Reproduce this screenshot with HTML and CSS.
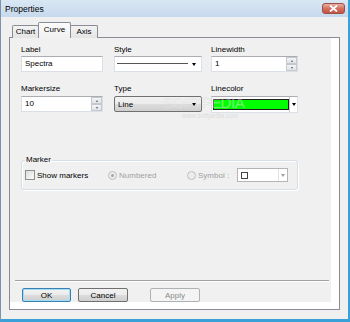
FILE: index.html
```html
<!DOCTYPE html>
<html lang="en">
<head>
  <meta charset="UTF-8" />
  <title>Properties</title>
  <link rel="stylesheet" href="styles.css">
</head>
<body>
  <div class="window">
    <div class="titlebar">
      <span class="title">Properties</span>
      <div class="close">
        <svg width="9" height="7" viewBox="0 0 9 7"><path d="M1 0.5 L8 6.5 M8 0.5 L1 6.5" stroke="#fff" stroke-width="1.8"/></svg>
      </div>
    </div>
    <div class="client">
      <div class="tabs">
        <div class="tab tab-chart">Chart</div>
        <div class="tab tab-curve active">Curve</div>
        <div class="tab tab-axis">Axis</div>
      </div>
      <div class="pane">
        <div class="page">
          <div class="row row-first">
            <div class="field c1">
              <label>Label</label>
              <div class="textbox">Spectra</div>
            </div>
            <div class="field c2">
              <label>Style</label>
              <div class="textbox combo">
                <span class="line-sample"></span>
                <span class="arrow"></span>
              </div>
            </div>
            <div class="field c3">
              <label>Linewidth</label>
              <div class="textbox spin">
                <span class="value">1</span>
                <span class="spinner">
                  <span class="sbtn"><i class="up"></i></span>
                  <span class="sbtn"><i class="down"></i></span>
                </span>
              </div>
            </div>
          </div>

          <div class="row row-second">
            <div class="field c1">
              <label>Markersize</label>
              <div class="textbox spin">
                <span class="value">10</span>
                <span class="spinner">
                  <span class="sbtn"><i class="up"></i></span>
                  <span class="sbtn"><i class="down"></i></span>
                </span>
              </div>
            </div>
            <div class="field c2">
              <label>Type</label>
              <div class="dropbtn">
                <span class="value">Line</span>
                <span class="arrow"></span>
              </div>
            </div>
            <div class="field c3">
              <label>Linecolor</label>
              <div class="textbox colorbox">
                <span class="swatch"></span>
                <span class="colordrop"><span class="arrow"></span></span>
              </div>
            </div>
          </div>

          <fieldset class="group">
            <legend>Marker</legend>
            <div class="group-row">
              <span class="opt opt-show"><span class="check"></span>Show markers</span>
              <span class="opt opt-num disabled"><span class="radio checked"></span>Numbered</span>
              <span class="opt opt-sym disabled"><span class="radio"></span>Symbol :</span>
              <span class="symcombo">
                <span class="symbox"><span class="square"></span></span>
                <span class="symdrop"><span class="arrow"></span></span>
              </span>
            </div>
          </fieldset>

          <div class="separator"></div>

          <div class="buttons">
            <button class="btn btn-default">OK</button>
            <button class="btn">Cancel</button>
            <button class="btn btn-apply" disabled>Apply</button>
          </div>

          <div class="watermark">SOFTPEDIA</div>
          <div class="watermark-url">www.softpedia.com</div>
        </div>
      </div>
    </div>
  </div>
</body>
</html>
```

FILE: styles.css
```css
html, body {
  margin: 0;
}
body {
  font-family: "Liberation Sans", Arial, sans-serif;
  font-size: 8px;
  color: #000;
  background: #f0f0f0;
}
.window {
  width: 350px;
  height: 322px;
  box-sizing: border-box;
  border-left: 1px solid #7d93ab;
  border-right: 2px solid #3aa0d8;
  border-bottom: 3px solid #3aa0d8;
  background: #f0f0f0;
  display: flex;
  flex-direction: column;
  overflow: hidden;
}
.titlebar {
  height: 17px;
  flex: none;
  display: flex;
  align-items: center;
  justify-content: space-between;
  background: linear-gradient(to bottom, #dae7f4, #c6d9ed);
  padding-left: 4px;
}
.title {
  font-size: 8.5px;
}
.close {
  width: 23px;
  height: 11px;
  margin-right: 3px;
  box-sizing: border-box;
  border: 1px solid #9a5047;
  border-radius: 3px;
  background: linear-gradient(to bottom, #eab0a6, #d3705f 50%, #c55443);
  display: flex;
  align-items: center;
  justify-content: center;
}
.client {
  flex: 1;
  padding: 5px 0 0 8px;
}

/* tabs */
.tabs {
  display: flex;
  align-items: flex-end;
  height: 16px;
  padding-left: 3px;
  margin-bottom: -1px;
  position: relative;
  z-index: 1;
}
.tab {
  height: 13px;
  box-sizing: border-box;
  border: 1px solid #898c95;
  border-bottom: none;
  background: linear-gradient(to bottom, #f3f3f3, #e4e4e4);
  border-radius: 2px 2px 0 0;
  text-align: center;
  line-height: 12px;
}
.tab-chart { width: 27px; }
.tab-curve { width: 33px; margin-left: -1px; }
.tab-axis { width: 28px; margin-left: -1px; }
.tab.active {
  height: 16px;
  background: linear-gradient(to bottom, #fbfbfb, #f0f0f0);
  line-height: 13px;
  position: relative;
  z-index: 2;
}

/* pane */
.pane {
  width: 331px;
  height: 273px;
  box-sizing: border-box;
  border: 1px solid #898c95;
  background: #fff;
}
.page {
  position: relative;
  width: 321px;
  height: 264px;
  box-sizing: border-box;
  background: #f0f0f0;
  padding: 7px 0 0 11px;
}
.row {
  display: flex;
}
.row-second {
  margin-top: 12px;
}
.field {
  display: flex;
  flex-direction: column;
}
.field label {
  height: 10px;
  line-height: 10px;
  margin-bottom: 1px;
}
.row-second .field label {
  margin-bottom: 2px;
}
.c1 { width: 82px; }
.c2 { width: 88px; margin-left: 11px; }
.c3 { width: 87px; margin-left: 9px; }

.textbox {
  height: 16px;
  box-sizing: border-box;
  border: 1px solid #dbdfe6;
  border-top-color: #abadb3;
  background: #fff;
  padding-left: 3px;
  line-height: 14px;
  display: flex;
  align-items: center;
}
.arrow {
  width: 0;
  height: 0;
  border-left: 2.5px solid transparent;
  border-right: 2.5px solid transparent;
  border-top: 3px solid #000;
}
.combo {
  padding: 0 5px 0 2px;
}
.line-sample {
  flex: 1;
  height: 1px;
  border-top: 1px solid #555;
  margin-right: 4px;
}
.spin {
  padding-right: 0;
}
.spin .value {
  flex: 1;
}
.spinner {
  width: 11px;
  height: 14px;
  display: flex;
  flex-direction: column;
}
.sbtn {
  flex: 1;
  box-sizing: border-box;
  border: 1px solid #c5c8cc;
  background: linear-gradient(to bottom, #f3f3f3, #e1e3e6);
  display: flex;
  align-items: center;
  justify-content: center;
}
.sbtn i {
  width: 0;
  height: 0;
  border-left: 1.5px solid transparent;
  border-right: 1.5px solid transparent;
}
.sbtn .up { border-bottom: 2px solid #4d6185; }
.sbtn .down { border-top: 2px solid #4d6185; }

.dropbtn {
  height: 16px;
  box-sizing: border-box;
  border: 1px solid #707070;
  border-radius: 2px;
  background: linear-gradient(to bottom, #f2f2f2, #ebebeb 50%, #dddddd 50%, #cfcfcf);
  display: flex;
  align-items: center;
  padding: 0 5px 0 3px;
}
.dropbtn .value {
  flex: 1;
}

.colorbox {
  height: 17px;
  padding: 0 0 0 1px;
}
.swatch {
  width: 76px;
  height: 11px;
  box-sizing: border-box;
  border: 1px solid #222;
  background: #00ff00;
}
.colordrop {
  flex: 1;
  align-self: stretch;
  border-left: 1px solid #c8c8c8;
  display: flex;
  align-items: center;
  justify-content: center;
}

/* marker group */
.group {
  margin: 42px 0 0 0;
  width: 277px;
  height: 35px;
  box-sizing: border-box;
  border: 1px solid #d5dfe5;
  border-radius: 3px;
  padding: 3px 0 0 3px;
  box-shadow: inset 1px 1px 0 #fff, 1px 1px 0 #fff;
}
.group legend {
  padding: 0 1px;
  height: 10px;
  line-height: 10px;
}
.group-row {
  display: flex;
  align-items: center;
  height: 14px;
}
.opt {
  display: flex;
  align-items: center;
}
.opt-show { width: 83px; }
.opt-num { width: 79px; }
.opt-sym { width: 50px; }
.disabled {
  color: #a0a0a0;
}
.check {
  width: 10px;
  height: 10px;
  box-sizing: border-box;
  border: 1px solid #8e8f8f;
  background: linear-gradient(135deg, #dcdcdc, #fbfbfb);
  margin-right: 2px;
}
.radio {
  width: 9px;
  height: 9px;
  box-sizing: border-box;
  border: 1px solid #c0c0c0;
  border-radius: 50%;
  background: #ececec;
  margin-right: 2px;
  display: flex;
  align-items: center;
  justify-content: center;
}
.radio.checked::after {
  content: "";
  width: 3px;
  height: 3px;
  border-radius: 50%;
  background: #a6a6a6;
}
.symcombo {
  width: 51px;
  height: 14px;
  box-sizing: border-box;
  border: 1px solid #b5b5b5;
  background: #fff;
  display: flex;
}
.symbox {
  width: 37px;
  display: flex;
  align-items: center;
  padding-left: 3px;
}
.square {
  width: 7px;
  height: 7px;
  box-sizing: border-box;
  border: 1.5px solid #444;
}
.symdrop {
  flex: 1;
  border-left: 1px solid #e2e2e2;
  display: flex;
  align-items: center;
  justify-content: center;
}
.symdrop .arrow {
  border-top-color: #a0a0a0;
}

.separator {
  margin: 90px 0 0 -6px;
  width: 314px;
  height: 1px;
  background: #a0a0a0;
  border-bottom: 1px solid #fff;
}
.buttons {
  display: flex;
  margin-top: 6px;
  margin-left: 1px;
}
.btn {
  height: 14px;
  width: 50px;
  box-sizing: border-box;
  padding: 0;
  font-family: "Liberation Sans", Arial, sans-serif;
  font-size: 8px;
  color: #000;
  border: 1px solid #707070;
  border-radius: 2px;
  background: linear-gradient(to bottom, #f2f2f2, #ebebeb 50%, #dddddd 50%, #cfcfcf);
  margin-right: 7px;
}
.btn-default {
  width: 49px;
  border-color: #3c7fb1;
  box-shadow: inset 0 0 0 1px #9fdcf6;
}
.btn-apply {
  margin-left: 15px;
  color: #8a8a8a;
  border-color: #adb2b5;
  background: #f4f4f4;
}

.watermark {
  position: absolute;
  left: 153px;
  top: 59px;
  font-size: 15px;
  line-height: 12px;
  letter-spacing: -0.4px;
  color: rgba(255, 255, 255, 0.35);
  -webkit-text-stroke: 0.5px rgba(190, 190, 190, 0.35);
  pointer-events: none;
}
.watermark-url {
  position: absolute;
  left: 172px;
  top: 74px;
  font-size: 6.5px;
  line-height: 7px;
  color: rgba(200, 200, 200, 0.55);
  pointer-events: none;
}
```
